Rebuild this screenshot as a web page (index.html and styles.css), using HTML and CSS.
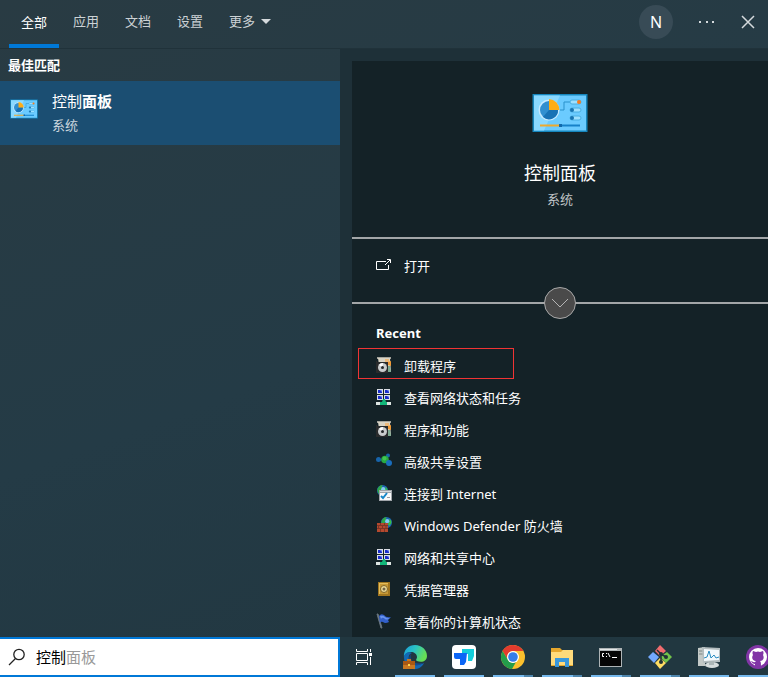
FILE: index.html
```html
<!DOCTYPE html>
<html lang="zh-CN">
<head>
  <meta charset="utf-8">
  <title>搜索</title>
  <link rel="stylesheet" href="styles.css">
</head>
<body>

<!-- shared icons -->
<svg class="defs" width="0" height="0">
  <symbol id="icon-panel" viewBox="0 0 56 40">
    <rect x="0.5" y="1" width="55" height="38" fill="#1686bd"/>
    <rect x="2" y="2.500" width="52" height="35" fill="#6bcbff"/>
    <path d="M2 2.500h26L12 37.500H2z" fill="#8ad9ff"/>
    <circle cx="17" cy="17" r="10.500" fill="#c5e9ff"/>
    <circle cx="17" cy="17" r="9" fill="#318fd0"/>
    <path d="M17 17L11 24A9 9 0 0 0 26 17z" fill="#1872b5"/>
    <path d="M17 17V6a11 11 0 0 1 10.500 11z" fill="#ffad16"/>
    <path d="M28 17h4V9h6" fill="none" stroke="#2b91cb"/>
    <rect x="38" y="7" width="11" height="4" rx="2" fill="#9de0ff" stroke="#48aee2"/>
    <rect x="38" y="15" width="11" height="4" rx="2" fill="#9de0ff" stroke="#48aee2"/>
    <rect x="38" y="23" width="11" height="4" rx="2" fill="#9de0ff" stroke="#48aee2"/>
    <circle cx="47" cy="9" r="2" fill="#f47b20"/>
    <circle cx="40" cy="17" r="2" fill="#1774b2"/>
    <circle cx="40" cy="25" r="2" fill="#1774b2"/>
    <path d="M8 32.500h20" stroke="#efa92c" stroke-width="2"/>
    <path d="M28 32.500h20" stroke="#1681c8" stroke-width="2"/>
    <rect x="27" y="31" width="3" height="3" fill="#1169ab"/>
  </symbol>
  <symbol id="icon-program" viewBox="0 0 16 16">
    <path d="M1 0h14v2H1z" fill="#a5a49c"/>
    <path d="M2 1h12l1 14H4z" fill="#d9d4c5"/>
    <path d="M9 2h4v6l-4 1z" fill="#ecba7c"/>
    <path d="M12 5l3-1v5l-3-1z" fill="#f19a36"/>
    <path d="M11 9h3l1 6h-4z" fill="#7ea990"/>
    <path d="M0 4h1v1h11v11H0z" fill="#292b2c"/>
    <circle cx="6.500" cy="10.500" r="4.500" fill="#c9cccd"/>
    <path d="M6.500 10.500L3 8a4.500 4.500 0 0 1 4-2z" fill="#fff"/>
    <circle cx="6.500" cy="10.500" r="1.500" fill="#25282a"/>
  </symbol>
  <symbol id="icon-network" viewBox="0 0 16 16">
    <path d="M1 0h6v5H1zM8 0h6v5H8zM1 6h6v5H1zM8 6h6v5H8z" fill="#d9dde5"/>
    <path d="M2 1h4v3H2zM9 1h4v3H9zM2 7h4v3H2zM9 7h4v3H9z" fill="#1a2ccb"/>
    <path d="M4 1h2v2zM11 1h2v2zM4 7h2v2zM11 7h2v2z" fill="#7b91f1"/>
    <path d="M0 13h15v3H0z" fill="#dce4e1"/>
    <path d="M4 13h2l1-3h2l1 3h1v3H4z" fill="#13b77a"/>
  </symbol>
  <symbol id="icon-globe" viewBox="0 0 16 16">
    <circle cx="8" cy="8" r="8" fill="#1c62b3"/>
    <path d="M1 5Q4 0 8 0q-1 5-2 6t2 5-3 4Q-1 11 1 5z" fill="#30a846"/>
    <path d="M12 3q4 2 3 6l-3 4-2-3 2-3z" fill="#38bf46"/>
    <circle cx="9" cy="6" r="3" fill="#9fe5ff" opacity=".8"/>
  </symbol>
</svg>

<header class="top-bar">
  <nav class="tabs">
    <a href="#" class="tab active">全部</a>
    <a href="#" class="tab">应用</a>
    <a href="#" class="tab">文档</a>
    <a href="#" class="tab">设置</a>
    <a href="#" class="tab">更多 <span class="caret"></span></a>
  </nav>
  <div class="top-actions">
    <button class="avatar">N</button>
    <button class="icon-btn" aria-label="选项">
      <svg width="16" height="16" fill="#d5dadd"><path d="M1 7h2v2H1zM8 7h2v2H8zM14 7h2v2h-2z"/></svg>
    </button>
    <button class="icon-btn" aria-label="关闭">
      <svg width="14" height="14" fill="none" stroke="#d5dadd" stroke-width="1.500"><path d="M1 1l12 12M13 1L1 13"/></svg>
    </button>
  </div>
</header>

<main class="content">
  <section class="results">
    <h2 class="group-title">最佳匹配</h2>
    <a href="#" class="best-match">
      <svg class="match-icon" width="28" height="20"><use href="#icon-panel"/></svg>
      <span class="match-text">
        <span class="match-name">控制<b>面板</b></span>
        <span class="match-type">系统</span>
      </span>
    </a>
  </section>

  <section class="preview">
    <div class="hero">
      <svg width="56" height="40"><use href="#icon-panel"/></svg>
      <h1 class="hero-title">控制面板</h1>
      <p class="hero-type">系统</p>
    </div>

    <div class="actions">
      <a href="#" class="row">
        <svg width="16" height="16" fill="none" stroke="#fff"><path d="M10 4.500H.5v8h12V8M9 8l5-5M11 2.500h3.500V6"/></svg>
        打开
      </a>
      <button class="expand" aria-label="展开">
        <svg width="18" height="10" fill="none" stroke="#b5b5b5"><path d="M1 1l8 8 8-8"/></svg>
      </button>
    </div>

    <h3 class="recent-title">Recent</h3>
    <ul class="recent">
      <li class="marked"><a href="#" class="row"><svg width="16" height="16"><use href="#icon-program"/></svg>卸载程序</a></li>
      <li><a href="#" class="row"><svg width="16" height="16"><use href="#icon-network"/></svg>查看网络状态和任务</a></li>
      <li><a href="#" class="row"><svg width="16" height="16"><use href="#icon-program"/></svg>程序和功能</a></li>
      <li><a href="#" class="row">
        <svg width="16" height="16"><path d="M2 7l8 0 2-5M10 7l3 4" stroke="#185c71" fill="none"/><circle cx="2.500" cy="6.500" r="2.500" fill="#1764aa"/><circle cx="12" cy="2.500" r="2" fill="#1764aa"/><circle cx="9" cy="6.500" r="3.800" fill="#27a844"/><circle cx="8.500" cy="5.500" r="2" fill="#42c651"/><circle cx="13" cy="10" r="3" fill="#196dbd"/></svg>高级共享设置</a></li>
      <li><a href="#" class="row">
        <svg width="16" height="16"><use href="#icon-globe" x="1" y="0" width="11" height="11"/><path d="M3 5h13v11H3z" fill="#a0a5aa"/><path d="M4 6h11v1H4z" fill="#d9dde0"/><path d="M4 8h11v7H4z" fill="#f9fafb"/><path d="M5 11l2 2 4-5" fill="none" stroke="#1687c9" stroke-width="2"/><path d="M11 12.500h3" stroke="#9a9da0"/></svg>连接到 Internet</a></li>
      <li><a href="#" class="row">
        <svg width="16" height="16"><use href="#icon-globe" x="5" y="0" width="11" height="11"/><path d="M1 6h11v9H1z" fill="#b4492e"/><path d="M1 8.500h11M1 11.500h11M4.500 6v2M8.500 6v2M2.500 9v2M6.500 9v2M10 9v2M4.500 12v3M8.500 12v3" stroke="#7d3526"/></svg>Windows Defender 防火墙</a></li>
      <li><a href="#" class="row"><svg width="16" height="16"><use href="#icon-network"/></svg>网络和共享中心</a></li>
      <li><a href="#" class="row">
        <svg width="16" height="16"><path d="M2 1h12v14H2z" fill="#a17620"/><path d="M3 2h9v11H3z" fill="#e3bd5b"/><path d="M4 3h8v10H4z" fill="#c99a36"/><circle cx="8" cy="8" r="3.500" fill="#efdc98" stroke="#806429"/><circle cx="8" cy="8" r="1.500" fill="#716449"/></svg>凭据管理器</a></li>
      <li><a href="#" class="row">
        <svg width="16" height="16"><path d="M1 1h1l4 14H5z" fill="#9ba3aa" stroke="#65717b"/><path d="M3 3q2-3 5-1 2 3 7 2l-3 3 1 2q-4 2-6 0-2-1-3 1z" fill="#3360ca"/><path d="M4 3q3-1 5 1t5 1q-4 3-6 0-2-1-3 1z" fill="#6a94ed"/></svg>查看你的计算机状态</a></li>
    </ul>
  </section>
</main>

<footer class="taskbar">
  <label class="search">
    <svg width="18" height="18" fill="none" stroke="#222" stroke-width="1.300"><circle cx="11" cy="6.500" r="5.200"/><path d="M7.500 10.500L1 17"/></svg>
    <input type="text" class="search-input" value="控制" aria-label="搜索">
    <span class="hint">面板</span>
  </label>
  <button class="task-view" aria-label="任务视图">
    <svg width="16" height="16" fill="none" stroke="#fff"><path d="M.5 0v2.500h11V0M.5 4.500h11v7H.5zM.5 16v-2.500h11V16M14.500 0v3M14.500 8v8"/><path d="M13 4h3v3h-3z" fill="#fff" stroke="none"/></svg>
  </button>
  <div class="apps">
    <button class="app" aria-label="Edge">
      <svg width="26" height="26" viewBox="0 0 26 26">
        <defs><linearGradient id="edge" x2="1" y2=".4"><stop stop-color="#199bdd"/><stop offset=".5" stop-color="#2bc3c3"/><stop offset="1" stop-color="#67df54"/></linearGradient></defs>
        <path d="M2 14C1 5 7 1 13 1c7 0 12 5 12 11 0 5-5 7-10 5-2-1 0-2 0-4 0-3-3-5-6-5-4 0-7 3-7 6z" fill="url(#edge)"/>
        <path d="M2 13c0-4 5-6 8-4-3 1-4 4-3 7 2 5 9 6 15 3-2 5-9 8-14 5-4-2-6-6-6-11z" fill="#1268b4"/>
        <path d="M9 10c-2 6 3 11 12 9-5 4-13 3-14-3 0-3 1-5 2-6z" fill="#134b8e"/>
        <path d="M5 17v-2h4v2h4v8H1v-8z" fill="#c87821"/><path d="M1 17h12v4H1z" fill="#a95914"/><path d="M6 20h2v2H6z" fill="#ffd34e"/>
      </svg>
    </button>
    <button class="app" aria-label="TIM">
      <svg width="26" height="26" viewBox="0 0 26 26"><rect x="1" y="1" width="24" height="24" rx="4" fill="#fff"/><path d="M11 5h12v7l-2 5h-4V10h-6z" fill="#13cedb"/><path d="M3 9h13l-1 9-2 3H9v-6H5q-2 0-2-2z" fill="#0b66f6"/></svg>
    </button>
    <button class="app multi" aria-label="Chrome">
      <svg width="26" height="26" viewBox="0 0 26 26"><circle cx="13" cy="13" r="12" fill="#fbc02d"/><path d="M2.600 7A12 12 0 0 1 23.400 7H13a6 6 0 0 0-5 9z" fill="#e33b2e"/><path d="M2.600 7L8 16a6 6 0 0 0 8 2l-4 7A12 12 0 0 1 2.600 7z" fill="#249d4b"/><circle cx="13" cy="13" r="6" fill="#fff"/><circle cx="13" cy="13" r="4.800" fill="#347de9"/></svg>
    </button>
    <button class="app multi" aria-label="文件资源管理器">
      <svg width="26" height="26" viewBox="0 0 26 26"><path d="M2 4h9l2 2h11v16H2z" fill="#e6a72d"/><path d="M2 8h10l2-2h10v15H2z" fill="#ffda7b"/><path d="M6 14h14v9h-4v-5h-6v5H6z" fill="#3a98dc"/></svg>
    </button>
    <button class="app multi" aria-label="命令提示符">
      <svg width="26" height="26" viewBox="0 0 26 26"><path d="M1 4h23v19H1z" fill="#aeb4b6"/><path d="M2 7h21v15H2z" fill="#050606"/><path d="M2 5h17v1H2z" fill="#e4e8e8"/><path d="M6 9.500H4.500v3H6M8.500 9v1M8.500 12v1M10 9l2 4M14 13.500h5" fill="none" stroke="#fff"/></svg>
    </button>
    <button class="app multi" aria-label="Git">
      <svg width="26" height="26" viewBox="0 0 26 26"><path d="M13 1l6 6-6 5-5-5z" fill="#f16b6e"/><path d="M6 8l6 5-5 6-6-6z" fill="#73a9ff"/><path d="M20 8l5 5-6 6-6-6z" fill="#73c34b"/><path d="M13 14l6 5-6 6-5-6z" fill="#ffdc62"/><path d="M10 6l4 4v8M14 10l5 3" stroke="#203137" stroke-width="1.500" fill="none"/><circle cx="14" cy="10" r="2" fill="#203137"/><circle cx="14" cy="18" r="2" fill="#203137"/><circle cx="19" cy="13" r="2" fill="#203137"/></svg>
    </button>
    <button class="app" aria-label="性能监视器">
      <svg width="26" height="26" viewBox="0 0 26 26"><path d="M2 4l7-1v19H2z" fill="#c3c9c7"/><path d="M3 7h5M3 10h5" stroke="#7e8785"/><path d="M6 3l18 1v14l-17 1z" fill="#b4bdbf"/><path d="M8 5l15 1v10L8 17z" fill="#f3f9fc"/><path d="M8 14l3-1 2-6 2 7 3-3 2 3 3-1" fill="none" stroke="#278bc0"/><ellipse cx="16" cy="21" rx="7" ry="3" fill="#d7dddd"/><path d="M13 17h5v4h-5z" fill="#adb7b8"/></svg>
    </button>
    <button class="app" aria-label="GitHub">
      <svg width="26" height="26" viewBox="0 0 26 26"><circle cx="13" cy="13" r="12" fill="#8135a6"/><circle cx="13" cy="13" r="9" fill="#fff"/><path d="M8 7l3 1q2-1 4 0l3-1q1 2 0 4c2 4-1 6-3 6 1 1 1 2 1 6h-6v-3c-2 0-3-1-4-3 2 0 2 2 4 1l1-1c-3 0-5-3-3-6q-1-2 0-4z" fill="#8135a6"/></svg>
    </button>
  </div>
</footer>

</body>
</html>
```
FILE: styles.css
```css
*, *::after { box-sizing: border-box; }
body {
  margin: 0;
  height: 100vh;
  display: flex;
  flex-direction: column;
  overflow: hidden;
  font-family: "Noto Sans", "Noto Sans CJK SC", sans-serif;
  font-size: 13px;
  line-height: 20px;
  color: #fff;
  background: linear-gradient(160deg, #293b43, #243b46 50%, #21363f);
}
h1, h2, h3, p, ul {
  margin: 0;
  padding: 0;
}
a {
  color: inherit;
  text-decoration: none;
}
button {
  padding: 0;
  border: none;
  background: none;
  color: inherit;
  font: inherit;
  cursor: pointer;
}
svg {
  display: block;
  flex: none;
}
.defs { position: absolute; }

/* top bar */
.top-bar {
  flex: none;
  display: flex;
  justify-content: space-between;
  height: 49px;
  border-bottom: 1px solid #20323a;
}
.tabs {
  display: flex;
  gap: 2px;
  padding-left: 9px;
}
.tab {
  display: flex;
  align-items: center;
  gap: 6px;
  padding: 0 12px 2px;
  color: #ccd2d5;
  border-top: 2px solid transparent;
  border-bottom: 6px solid transparent;
}
.tab.active {
  color: #fff;
  border-bottom: 4px solid #0078d7;
}
.caret {
  border: 5px solid transparent;
  border-top-color: #d5dadd;
  border-bottom: none;
}
.top-actions {
  display: flex;
  align-items: center;
  gap: 12px;
  padding: 0 5px 4px 0;
}
.avatar {
  width: 34px;
  height: 34px;
  margin-right: 6px;
  border-radius: 50%;
  background: #384b56;
  font-size: 16px;
}
.icon-btn {
  width: 30px;
  height: 30px;
  display: flex;
  align-items: center;
  justify-content: center;
}

/* results */
.content {
  flex: 1;
  min-height: 0;
  display: flex;
}
.results {
  width: 340px;
}
.group-title {
  padding: 6px 8px;
  font-size: 13px;
}
.best-match {
  display: flex;
  gap: 14px;
  height: 64px;
  padding: 8px 10px;
  background: #1b4e72;
}
.match-icon { margin-top: 10px; }
.match-text {
  display: flex;
  flex-direction: column;
  gap: 2px;
}
.match-name {
  font-size: 15px;
  line-height: 24px;
}
.match-type { color: #cbd6de; }

/* preview */
.preview {
  flex: 1;
  min-width: 0;
  overflow: hidden;
  background: #142227;
  border-top: 12px solid #1e3038;
  border-left: 12px solid #1e3038;
}
.hero {
  display: flex;
  flex-direction: column;
  align-items: center;
  height: 178px;
  padding-top: 32px;
  border-bottom: 2px solid #a3a6a8;
}
.hero-title {
  margin-top: 26px;
  font-size: 18px;
  font-weight: 400;
  line-height: 28px;
}
.hero-type {
  margin-top: 2px;
  color: #c0c5c8;
}
.actions {
  position: relative;
  height: 65px;
  padding-top: 11px;
  border-bottom: 2px solid #a3a6a8;
}
.row {
  display: flex;
  align-items: center;
  gap: 12px;
  height: 32px;
  padding: 0 24px;
}
.row svg { margin-bottom: 2px; }
.expand {
  position: absolute;
  left: 50%;
  bottom: -17px;
  transform: translateX(-50%);
  width: 32px;
  height: 32px;
  display: flex;
  align-items: center;
  justify-content: center;
  border: 1px solid #a8a8a8;
  border-radius: 50%;
  background: #4a4a4a;
}
.recent-title {
  padding: 19px 24px 7px;
  font-size: 13px;
}
.recent { list-style: none; }
.marked { position: relative; }
.marked::after {
  content: "";
  position: absolute;
  top: -2px;
  left: 6px;
  width: 156px;
  height: 31px;
  border: 1px solid #f03434;
  pointer-events: none;
}

/* taskbar */
.taskbar {
  flex: none;
  display: flex;
  height: 40px;
  background: #213740;
}
.search {
  flex: none;
  width: 340px;
  display: flex;
  align-items: center;
  padding-left: 8px;
  background: #fff;
  border: 2px solid #0078d7;
  border-left: none;
  font-size: 15px;
}
.search-input {
  width: 30px;
  margin-left: 10px;
  padding: 0;
  border: none;
  outline: none;
  background: none;
  color: #000;
  font: inherit;
}
.hint { color: #999; }
.task-view {
  flex: none;
  width: 48px;
  display: flex;
  align-items: center;
  justify-content: center;
}
.apps {
  flex: 1;
  min-width: 0;
  display: flex;
  gap: 9px;
  padding-left: 7px;
  overflow: hidden;
}
.app {
  flex: none;
  width: 40px;
  display: flex;
  align-items: center;
  justify-content: center;
  background: linear-gradient(#76b9ed, #76b9ed) bottom / 100% 2px no-repeat;
}
.app.multi {
  background-image: linear-gradient(90deg, #76b9ed 31px, #4f86ad 31px);
}
```
